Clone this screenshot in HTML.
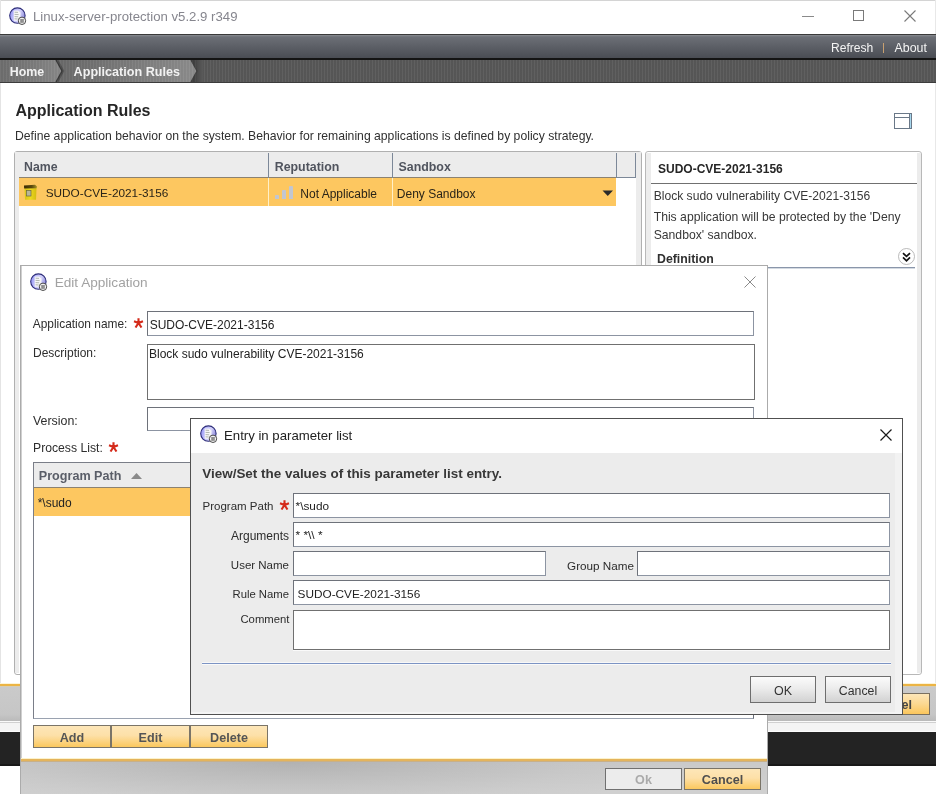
<!DOCTYPE html><html><head><meta charset="utf-8"><style>html,body{margin:0;padding:0;}body{width:936px;height:794px;position:relative;overflow:hidden;background:#fff;will-change:transform;font-family:"Liberation Sans",sans-serif;}div{box-sizing:border-box;}</style></head><body>
<div style="position:absolute;left:0px;top:0px;width:936px;height:1px;background:#d4d4d4"></div>
<div style="position:absolute;left:0px;top:0px;width:1px;height:684px;background:#e4e4e4"></div>
<div style="position:absolute;left:935px;top:0px;width:1px;height:684px;background:#e8e8e8"></div>
<svg style="position:absolute;left:9px;top:7px" width="18" height="18" viewBox="0 0 18 18">
<defs><linearGradient id="ag9_7" x1="0" y1="0" x2="1" y2="0.3"><stop offset="0" stop-color="#8a8af4"/><stop offset="0.35" stop-color="#b8b8fa"/><stop offset="0.7" stop-color="#d4d2fa"/><stop offset="1" stop-color="#9a98e0"/></linearGradient></defs>
<circle cx="8.4" cy="8.6" r="7.7" fill="url(#ag9_7)" stroke="#2c2c78" stroke-width="1.1"/>
<path d="M4.6 3.4 L9.2 3.6 L11.6 5.8 L11 13.8 L4.8 13.8 Z" fill="#f6f6f8"/>
<path d="M5.6 5.2 L9 5.4 M5.6 7.4 L9.6 7.6 M5.6 9.6 L9.2 9.8 M5.6 11.8 L8.6 12" stroke="#a8b0a8" stroke-width="0.9"/>
<circle cx="13" cy="13.8" r="3.7" fill="#f2f2f2" stroke="#3a3a3a" stroke-width="0.9"/>
<rect x="11.3" y="12" width="3.4" height="3.8" fill="#7a7a7a"/>
<path d="M12.1 12 L12.1 15.8 M13.7 12 L13.7 15.8" stroke="#b8b8b8" stroke-width="0.5"/>
</svg>
<div style="position:absolute;top:9.83px;font-size:13.2px;line-height:13.2px;font-weight:400;color:#86868e;white-space:nowrap;left:33px;">Linux-server-protection v5.2.9 r349</div>
<div style="position:absolute;left:802px;top:16px;width:12px;height:1px;background:#8a8a8a"></div>
<div style="position:absolute;left:853px;top:10px;width:11px;height:11px;border:1px solid #7a7a7a"></div>
<svg style="position:absolute;left:903px;top:9px" width="14" height="14" viewBox="0 0 14 14"><path d="M1.5 1.5 L12.5 12.5 M12.5 1.5 L1.5 12.5" stroke="#7a7a7a" stroke-width="1.1"/></svg>
<div style="position:absolute;left:0px;top:34px;width:936px;height:1px;background:#3a3a3a"></div>
<div style="position:absolute;left:0px;top:35px;width:936px;height:23px;background:linear-gradient(#8a8d92 0,#6c6f76 2px,#60636a 40%,#4a4d54)"></div>
<div style="position:absolute;left:0px;top:58px;width:936px;height:2px;background:#141414"></div>
<div style="position:absolute;top:42.26px;font-size:12.1px;line-height:12.1px;font-weight:400;color:#f4f4f4;white-space:nowrap;left:831px;">Refresh</div>
<div style="position:absolute;left:883px;top:43px;width:1px;height:10px;background:#c8a070"></div>
<div style="position:absolute;top:42.00px;font-size:12.4px;line-height:12.4px;font-weight:400;color:#f4f4f4;white-space:nowrap;left:894.5px;">About</div>
<div style="position:absolute;left:0px;top:60px;width:936px;height:22px;background:repeating-linear-gradient(90deg, rgba(255,255,255,0.04) 0 1px, rgba(0,0,0,0.05) 1px 3px),#5a5a5a"></div>
<svg style="position:absolute;left:0;top:60px" width="205" height="22" viewBox="0 0 205 22"><defs><linearGradient id="bc1" x1="0" x2="1"><stop offset="0" stop-color="#6e6e6e"/><stop offset="1" stop-color="#8a8a8a"/></linearGradient><linearGradient id="bc2" x1="0" x2="1"><stop offset="0" stop-color="#6a6a6a"/><stop offset="1" stop-color="#8e8e8e"/></linearGradient><linearGradient id="bc3" x1="0" x2="1"><stop offset="0" stop-color="#3a3a3a"/><stop offset="1" stop-color="#5a5a5a"/></linearGradient></defs><path d="M191 0 L197 11 L191 22 L203 22 L203 0 Z" fill="url(#bc3)"/><path d="M56 0 L191 0 L197 11 L191 22 L56 22 L62 11 Z" fill="url(#bc2)"/><path d="M0 0 L56 0 L62 11 L56 22 L0 22 Z" fill="url(#bc1)"/><path d="M56 0 L62 11 L56 22" fill="none" stroke="#383838" stroke-width="1.3"/><path d="M57.5 0 L63.5 11 L57.5 22" fill="none" stroke="rgba(0,0,0,0.25)" stroke-width="1.5"/><path d="M191 0 L197 11 L191 22" fill="none" stroke="#404040" stroke-width="1.3"/></svg>
<div style="position:absolute;left:0px;top:60px;width:197px;height:22px;background:repeating-linear-gradient(90deg, rgba(255,255,255,0.035) 0 1px, rgba(0,0,0,0.03) 1px 3px);"></div>
<div style="position:absolute;left:0px;top:82px;width:936px;height:1px;background:#3c3c3c"></div>
<div style="position:absolute;top:66.10px;font-size:12.4px;line-height:12.4px;font-weight:700;color:#f2f2f2;white-space:nowrap;left:9.7px;">Home</div>
<div style="position:absolute;top:65.93px;font-size:12.6px;line-height:12.6px;font-weight:700;color:#f2f2f2;white-space:nowrap;left:73.6px;">Application Rules</div>
<div style="position:absolute;top:102.96px;font-size:16px;line-height:16px;font-weight:700;color:#262626;white-space:nowrap;left:15.4px;">Application Rules</div>
<div style="position:absolute;top:129.67px;font-size:12.2px;line-height:12.2px;font-weight:400;color:#303030;white-space:nowrap;left:15px;">Define application behavior on the system. Behavior for remaining applications is defined by policy strategy.</div>
<svg style="position:absolute;left:894px;top:113px" width="19" height="17" viewBox="0 0 19 17"><rect x="0.5" y="0.5" width="17" height="15" fill="#fff" stroke="#6a7888"/><line x1="1" y1="4.5" x2="15" y2="4.5" stroke="#6a7888"/><rect x="16" y="1" width="1" height="14" fill="#a8d8ee"/><line x1="15.5" y1="1" x2="15.5" y2="15" stroke="#6a7888"/></svg>
<div style="position:absolute;left:14px;top:151px;width:628px;height:524px;border:1px solid #b0b0b0;border-radius:3px;background:#fff"></div>
<div style="position:absolute;left:15px;top:152px;width:4px;height:521px;background:#ececec"></div>
<div style="position:absolute;left:636px;top:152px;width:5px;height:521px;background:#ececec"></div>
<div style="position:absolute;left:15px;top:152px;width:626px;height:26px;background:#ececec;border-radius:2px 2px 0 0"></div>
<div style="position:absolute;left:19px;top:177px;width:598px;height:1px;background:#8c8270"></div>
<div style="position:absolute;left:268px;top:153px;width:1px;height:25px;background:#7c8898"></div>
<div style="position:absolute;left:392px;top:153px;width:1px;height:25px;background:#7c8898"></div>
<div style="position:absolute;left:616px;top:153px;width:1px;height:25px;background:#7c8898"></div>
<div style="position:absolute;left:617px;top:177px;width:19px;height:1px;background:#7c8898"></div>
<div style="position:absolute;left:635px;top:153px;width:1px;height:25px;background:#7c8898"></div>
<div style="position:absolute;top:160.99px;font-size:12.3px;line-height:12.3px;font-weight:700;color:#50545e;white-space:nowrap;left:24px;">Name</div>
<div style="position:absolute;top:160.90px;font-size:12.4px;line-height:12.4px;font-weight:700;color:#50545e;white-space:nowrap;left:274.7px;">Reputation</div>
<div style="position:absolute;top:160.90px;font-size:12.4px;line-height:12.4px;font-weight:700;color:#50545e;white-space:nowrap;left:398.5px;">Sandbox</div>
<div style="position:absolute;left:19px;top:178px;width:597px;height:28px;background:#fdc760"></div>
<div style="position:absolute;left:268px;top:178px;width:1px;height:28px;background:#fff0c8"></div>
<div style="position:absolute;left:392px;top:178px;width:1px;height:28px;background:#fff0c8"></div>
<svg style="position:absolute;left:23px;top:184px" width="15" height="17" viewBox="0 0 15 17"><defs><linearGradient id="lidg" x1="0" x2="1"><stop offset="0" stop-color="#3a2c04"/><stop offset="0.6" stop-color="#5a4a10"/><stop offset="1" stop-color="#a89428"/></linearGradient><linearGradient id="boxg" x1="0" x2="1"><stop offset="0" stop-color="#d8c418"/><stop offset="0.5" stop-color="#ecd820"/><stop offset="1" stop-color="#d4bc10"/></linearGradient></defs><path d="M1.5 3.5 L13 3 L13.5 4 L13 15.8 L2 15.8 Z" fill="url(#boxg)"/><path d="M1 1.6 L12 0.8 L14 2.6 L13.6 4.2 L1.2 4.4 Z" fill="url(#lidg)"/><rect x="3.4" y="6.4" width="4.6" height="5.6" fill="#b8b69a" stroke="#6a6840" stroke-width="0.7"/></svg>
<div style="position:absolute;top:187.91px;font-size:11.8px;line-height:11.8px;font-weight:400;color:#2a2418;white-space:nowrap;left:45.7px;">SUDO-CVE-2021-3156</div>
<div style="position:absolute;left:275px;top:195px;width:4px;height:4px;background:#c2c6d0;border-radius:1px 1px 0 0"></div>
<div style="position:absolute;left:282px;top:190px;width:4px;height:9px;background:#c2c6d0;border-radius:1px 1px 0 0"></div>
<div style="position:absolute;left:289px;top:186px;width:4px;height:13px;background:#c2c6d0;border-radius:1px 1px 0 0"></div>
<div style="position:absolute;top:187.74px;font-size:12px;line-height:12px;font-weight:400;color:#2a2418;white-space:nowrap;left:300.3px;">Not Applicable</div>
<div style="position:absolute;top:187.74px;font-size:12px;line-height:12px;font-weight:400;color:#2a2418;white-space:nowrap;left:396.8px;">Deny Sandbox</div>
<svg style="position:absolute;left:602px;top:189.5px" width="12" height="7" viewBox="0 0 12 7"><path d="M0.5 0.5 L11 0.5 L5.75 6 Z" fill="#2a2a2a"/></svg>
<div style="position:absolute;left:645px;top:151px;width:277px;height:524px;border:1px solid #b8b8b8;border-radius:3px;background:#fff"></div>
<div style="position:absolute;left:646px;top:153px;width:5px;height:520px;background:#ececec"></div>
<div style="position:absolute;left:917px;top:153px;width:4px;height:520px;background:#ececec"></div>
<div style="position:absolute;top:162.54px;font-size:12px;line-height:12px;font-weight:700;color:#262626;white-space:nowrap;left:658px;">SUDO-CVE-2021-3156</div>
<div style="position:absolute;left:651px;top:183px;width:266px;height:1px;background:#707070"></div>
<div style="position:absolute;top:189.76px;font-size:12.1px;line-height:12.1px;font-weight:400;color:#383838;white-space:nowrap;left:653.7px;">Block sudo vulnerability CVE-2021-3156</div>
<div style="position:absolute;top:211.47px;font-size:12.2px;line-height:12.2px;font-weight:400;color:#383838;white-space:nowrap;left:653.7px;">This application will be protected by the 'Deny</div>
<div style="position:absolute;top:228.67px;font-size:12.2px;line-height:12.2px;font-weight:400;color:#383838;white-space:nowrap;left:653.7px;">Sandbox' sandbox.</div>
<div style="position:absolute;top:252.59px;font-size:12.3px;line-height:12.3px;font-weight:700;color:#303030;white-space:nowrap;left:657px;">Definition</div>
<svg style="position:absolute;left:897.7px;top:247.8px" width="18" height="18" viewBox="0 0 18 18"><circle cx="8.5" cy="8.5" r="8" fill="#fff" stroke="#a8a8a8" stroke-width="0.8"/><path d="M5 5.2 L8.5 8.4 L12 5.2 M5 9.4 L8.5 12.8 L12 9.4" fill="none" stroke="#111" stroke-width="1.7"/></svg>
<div style="position:absolute;left:651px;top:267px;width:264px;height:1px;background:#8a96aa"></div>
<div style="position:absolute;left:651px;top:268px;width:264px;height:1px;background:#d4dae2"></div>
<div style="position:absolute;left:0px;top:683px;width:936px;height:1px;background:#fdf4d8"></div>
<div style="position:absolute;left:0px;top:684px;width:936px;height:2px;background:#ecb444"></div>
<div style="position:absolute;left:0px;top:686px;width:936px;height:1px;background:#d6cdb6"></div>
<div style="position:absolute;left:0px;top:687px;width:936px;height:34px;background:linear-gradient(#cacaca,#c6c6c6 80%,#bababa)"></div>
<div style="position:absolute;left:848px;top:693px;width:82px;height:22px;border:1px solid #7a7060;background:linear-gradient(#fde6b8,#fcd890 50%,#fbc65c)"></div>
<div style="position:absolute;top:698.83px;font-size:12.6px;line-height:12.6px;font-weight:700;color:#444;white-space:nowrap;right:24px;">Cancel</div>
<div style="position:absolute;left:0px;top:721px;width:936px;height:1px;background:#fafafa"></div>
<div style="position:absolute;left:0px;top:722px;width:936px;height:1px;background:#d0d0d0"></div>
<div style="position:absolute;left:0px;top:723px;width:936px;height:8px;background:#f4f4f4"></div>
<div style="position:absolute;left:0px;top:731px;width:936px;height:1px;background:#fcfcfc"></div>
<div style="position:absolute;left:0px;top:732px;width:936px;height:32px;background:#232323"></div>
<div style="position:absolute;left:0px;top:764px;width:936px;height:2px;background:#181818"></div>
<div style="position:absolute;left:20px;top:265px;width:748px;height:540px;border:1px solid #ababab;box-shadow:inset 1px 0 0 #d0d0d0;background:#fff"></div>
<svg style="position:absolute;left:30px;top:273px" width="18" height="18" viewBox="0 0 18 18">
<defs><linearGradient id="ag30_273" x1="0" y1="0" x2="1" y2="0.3"><stop offset="0" stop-color="#8a8af4"/><stop offset="0.35" stop-color="#b8b8fa"/><stop offset="0.7" stop-color="#d4d2fa"/><stop offset="1" stop-color="#9a98e0"/></linearGradient></defs>
<circle cx="8.4" cy="8.6" r="7.7" fill="url(#ag30_273)" stroke="#2c2c78" stroke-width="1.1"/>
<path d="M4.6 3.4 L9.2 3.6 L11.6 5.8 L11 13.8 L4.8 13.8 Z" fill="#f6f6f8"/>
<path d="M5.6 5.2 L9 5.4 M5.6 7.4 L9.6 7.6 M5.6 9.6 L9.2 9.8 M5.6 11.8 L8.6 12" stroke="#a8b0a8" stroke-width="0.9"/>
<circle cx="13" cy="13.8" r="3.7" fill="#f2f2f2" stroke="#3a3a3a" stroke-width="0.9"/>
<rect x="11.3" y="12" width="3.4" height="3.8" fill="#7a7a7a"/>
<path d="M12.1 12 L12.1 15.8 M13.7 12 L13.7 15.8" stroke="#b8b8b8" stroke-width="0.5"/>
</svg>
<div style="position:absolute;top:275.99px;font-size:13.6px;line-height:13.6px;font-weight:400;color:#a2a2a2;white-space:nowrap;left:54.7px;">Edit Application</div>
<svg style="position:absolute;left:743px;top:275px" width="14" height="14" viewBox="0 0 14 14"><path d="M1.5 1.5 L12.5 12.5 M12.5 1.5 L1.5 12.5" stroke="#8a8a8a" stroke-width="1"/></svg>
<div style="position:absolute;top:319.13px;font-size:11.9px;line-height:11.9px;font-weight:400;color:#2e2e2e;white-space:nowrap;left:32.8px;">Application name:</div>
<svg style="position:absolute;left:133px;top:318px" width="11" height="10" viewBox="0 0 11 10"><path d="M5.5 0.3 L5.5 5 M5.5 5 L1 3.2 M5.5 5 L10 3.2 M5.5 5 L2.5 9.5 M5.5 5 L8.5 9.5" stroke="#d42a1a" stroke-width="2.1"/></svg>
<div style="position:absolute;left:147px;top:311px;width:607px;height:25px;background:#fff;border-top:1px solid #6e727a;border-left:1px solid #6e727a;border-right:1px solid #8c94a2;border-bottom:1px solid #8c94a2;box-shadow:inset 0 -1px 0 #fff"></div>
<div style="position:absolute;top:318.94px;font-size:12px;line-height:12px;font-weight:400;color:#222;white-space:nowrap;left:149.7px;">SUDO-CVE-2021-3156</div>
<div style="position:absolute;top:347.04px;font-size:12px;line-height:12px;font-weight:400;color:#2e2e2e;white-space:nowrap;left:33px;">Description:</div>
<div style="position:absolute;left:147px;top:344px;width:608px;height:56px;background:#fff;border:1px solid #707070"></div>
<div style="position:absolute;top:348.04px;font-size:12px;line-height:12px;font-weight:400;color:#222;white-space:nowrap;left:149px;">Block sudo vulnerability CVE-2021-3156</div>
<div style="position:absolute;top:414.70px;font-size:12.4px;line-height:12.4px;font-weight:400;color:#2e2e2e;white-space:nowrap;left:33px;">Version:</div>
<div style="position:absolute;left:147px;top:407px;width:607px;height:24px;background:#fff;border-top:1px solid #6e727a;border-left:1px solid #6e727a;border-right:1px solid #8c94a2;border-bottom:1px solid #8c94a2;box-shadow:inset 0 -1px 0 #fff"></div>
<div style="position:absolute;top:442.27px;font-size:12.2px;line-height:12.2px;font-weight:400;color:#2e2e2e;white-space:nowrap;left:33px;">Process List:</div>
<svg style="position:absolute;left:108px;top:442px" width="11" height="10" viewBox="0 0 11 10"><path d="M5.5 0.3 L5.5 5 M5.5 5 L1 3.2 M5.5 5 L10 3.2 M5.5 5 L2.5 9.5 M5.5 5 L8.5 9.5" stroke="#d42a1a" stroke-width="2.1"/></svg>
<div style="position:absolute;left:33px;top:462px;width:721px;height:257px;border-left:1px solid #7a7e88;border-top:1px solid #7a7e88;border-right:1px solid #6a6e78;border-bottom:1px solid #9aa2b0;background:#fff"></div>
<div style="position:absolute;left:34px;top:463px;width:719px;height:25px;background:#ececec"></div>
<div style="position:absolute;left:34px;top:487px;width:719px;height:1px;background:#8c8270"></div>
<div style="position:absolute;left:34px;top:488px;width:719px;height:1px;background:#b8a070"></div>
<div style="position:absolute;top:470.33px;font-size:12.6px;line-height:12.6px;font-weight:700;color:#5a5e68;white-space:nowrap;left:38.8px;">Program Path</div>
<svg style="position:absolute;left:130px;top:472px" width="13" height="8" viewBox="0 0 13 8"><path d="M1 7 L6.5 1 L12 7 Z" fill="#8a8a8a"/></svg>
<div style="position:absolute;left:34px;top:488px;width:719px;height:28px;background:#fdc760"></div>
<div style="position:absolute;top:496.84px;font-size:12px;line-height:12px;font-weight:400;color:#222;white-space:nowrap;left:37.7px;">*\sudo</div>
<div style="position:absolute;left:33px;top:725px;width:78px;height:23px;border:1px solid #7a7468;background:linear-gradient(#fde6b8,#fde0a8 45%,#fbc85e)"></div>
<div style="position:absolute;left:33px;top:725px;width:78px;height:23px;line-height:23px;text-align:center;font-size:12.6px;font-weight:700;color:#555"><span style="position:relative;top:1.5px">Add</span></div>
<div style="position:absolute;left:111px;top:725px;width:79px;height:23px;border:1px solid #7a7468;background:linear-gradient(#fde6b8,#fde0a8 45%,#fbc85e)"></div>
<div style="position:absolute;left:111px;top:725px;width:79px;height:23px;line-height:23px;text-align:center;font-size:12.6px;font-weight:700;color:#555"><span style="position:relative;top:1.5px">Edit</span></div>
<div style="position:absolute;left:190px;top:725px;width:78px;height:23px;border:1px solid #7a7468;background:linear-gradient(#fde6b8,#fde0a8 45%,#fbc85e)"></div>
<div style="position:absolute;left:190px;top:725px;width:78px;height:23px;line-height:23px;text-align:center;font-size:12.6px;font-weight:700;color:#555"><span style="position:relative;top:1.5px">Delete</span></div>
<div style="position:absolute;left:21px;top:758px;width:746px;height:1px;background:#fcf2cc"></div>
<div style="position:absolute;left:21px;top:759px;width:746px;height:2px;background:#e4b45c"></div>
<div style="position:absolute;left:21px;top:761px;width:746px;height:1px;background:#c8b088"></div>
<div style="position:absolute;left:21px;top:762px;width:746px;height:32px;background:linear-gradient(rgba(255,255,255,0),rgba(255,255,255,0.12)),radial-gradient(ellipse 380px 55px at 270px 0px, #b2b2b2, #c6c6c6 75%, #cacaca)"></div>
<div style="position:absolute;left:605px;top:768px;width:77px;height:22px;border:1px solid #707070;background:#ececec"></div>
<div style="position:absolute;left:605px;top:768px;width:77px;height:22px;line-height:22px;text-align:center;font-size:12.6px;font-weight:700;color:#aaaaaa"><span style="position:relative;top:1px">Ok</span></div>
<div style="position:absolute;left:684px;top:768px;width:77px;height:22px;border:1px solid #7a7468;background:linear-gradient(#fde6b8,#fde0a8 45%,#fbc85e)"></div>
<div style="position:absolute;left:684px;top:768px;width:77px;height:22px;line-height:22px;text-align:center;font-size:12.6px;font-weight:700;color:#4e4e4e"><span style="position:relative;top:1.2px">Cancel</span></div>
<div style="position:absolute;left:190px;top:418px;width:713px;height:297px;border:1px solid #505050;background:#ececec"></div>
<div style="position:absolute;left:191px;top:419px;width:711px;height:34px;background:#fff"></div>
<div style="position:absolute;left:895px;top:453px;width:7px;height:261px;background:#f2f2f2"></div>
<div style="position:absolute;left:191px;top:712px;width:711px;height:2px;background:#f4f4f4"></div>
<svg style="position:absolute;left:200px;top:425px" width="18" height="18" viewBox="0 0 18 18">
<defs><linearGradient id="ag200_425" x1="0" y1="0" x2="1" y2="0.3"><stop offset="0" stop-color="#8a8af4"/><stop offset="0.35" stop-color="#b8b8fa"/><stop offset="0.7" stop-color="#d4d2fa"/><stop offset="1" stop-color="#9a98e0"/></linearGradient></defs>
<circle cx="8.4" cy="8.6" r="7.7" fill="url(#ag200_425)" stroke="#2c2c78" stroke-width="1.1"/>
<path d="M4.6 3.4 L9.2 3.6 L11.6 5.8 L11 13.8 L4.8 13.8 Z" fill="#f6f6f8"/>
<path d="M5.6 5.2 L9 5.4 M5.6 7.4 L9.6 7.6 M5.6 9.6 L9.2 9.8 M5.6 11.8 L8.6 12" stroke="#a8b0a8" stroke-width="0.9"/>
<circle cx="13" cy="13.8" r="3.7" fill="#f2f2f2" stroke="#3a3a3a" stroke-width="0.9"/>
<rect x="11.3" y="12" width="3.4" height="3.8" fill="#7a7a7a"/>
<path d="M12.1 12 L12.1 15.8 M13.7 12 L13.7 15.8" stroke="#b8b8b8" stroke-width="0.5"/>
</svg>
<div style="position:absolute;top:428.83px;font-size:13.2px;line-height:13.2px;font-weight:400;color:#222;white-space:nowrap;left:224px;">Entry in parameter list</div>
<svg style="position:absolute;left:879px;top:428px" width="14" height="14" viewBox="0 0 14 14"><path d="M1.5 1.5 L12.5 12.5 M12.5 1.5 L1.5 12.5" stroke="#1a1a1a" stroke-width="1.2"/></svg>
<div style="position:absolute;top:467.21px;font-size:13.45px;line-height:13.45px;font-weight:700;color:#383838;white-space:nowrap;left:202.3px;">View/Set the values of this parameter list entry.</div>
<div style="position:absolute;top:501.47px;font-size:11.5px;line-height:11.5px;font-weight:400;color:#2c2c2c;white-space:nowrap;right:662.5px;">Program Path</div>
<svg style="position:absolute;left:278.5px;top:500px" width="11" height="10" viewBox="0 0 11 10"><path d="M5.5 0.3 L5.5 5 M5.5 5 L1 3.2 M5.5 5 L10 3.2 M5.5 5 L2.5 9.5 M5.5 5 L8.5 9.5" stroke="#d42a1a" stroke-width="2.1"/></svg>
<div style="position:absolute;left:293px;top:493px;width:597px;height:25px;background:#fff;border-top:1px solid #6e727a;border-left:1px solid #6e727a;border-right:1px solid #8c94a2;border-bottom:1px solid #8c94a2;box-shadow:inset 0 -1px 0 #fff"></div>
<div style="position:absolute;top:501.01px;font-size:11.8px;line-height:11.8px;font-weight:400;color:#222;white-space:nowrap;left:295.6px;">*\sudo</div>
<div style="position:absolute;top:529.84px;font-size:12px;line-height:12px;font-weight:400;color:#2c2c2c;white-space:nowrap;right:647px;">Arguments</div>
<div style="position:absolute;left:293px;top:522px;width:597px;height:25px;background:#fff;border-top:1px solid #6e727a;border-left:1px solid #6e727a;border-right:1px solid #8c94a2;border-bottom:1px solid #8c94a2;box-shadow:inset 0 -1px 0 #fff"></div>
<div style="position:absolute;top:530.01px;font-size:11.8px;line-height:11.8px;font-weight:400;color:#222;white-space:nowrap;left:295.6px;">* *\\ *</div>
<div style="position:absolute;top:559.87px;font-size:11.5px;line-height:11.5px;font-weight:400;color:#2c2c2c;white-space:nowrap;right:647px;">User Name</div>
<div style="position:absolute;left:293px;top:551px;width:253px;height:25px;background:#fff;border-top:1px solid #6e727a;border-left:1px solid #6e727a;border-right:1px solid #8c94a2;border-bottom:1px solid #8c94a2;box-shadow:inset 0 -1px 0 #fff"></div>
<div style="position:absolute;top:559.50px;font-size:11.7px;line-height:11.7px;font-weight:400;color:#2c2c2c;white-space:nowrap;right:302px;">Group Name</div>
<div style="position:absolute;left:637px;top:551px;width:253px;height:25px;background:#fff;border-top:1px solid #6e727a;border-left:1px solid #6e727a;border-right:1px solid #8c94a2;border-bottom:1px solid #8c94a2;box-shadow:inset 0 -1px 0 #fff"></div>
<div style="position:absolute;top:588.93px;font-size:11.3px;line-height:11.3px;font-weight:400;color:#2c2c2c;white-space:nowrap;right:647px;">Rule Name</div>
<div style="position:absolute;left:293px;top:580px;width:597px;height:25px;background:#fff;border-top:1px solid #6e727a;border-left:1px solid #6e727a;border-right:1px solid #8c94a2;border-bottom:1px solid #8c94a2;box-shadow:inset 0 -1px 0 #fff"></div>
<div style="position:absolute;top:588.51px;font-size:11.8px;line-height:11.8px;font-weight:400;color:#222;white-space:nowrap;left:297.6px;">SUDO-CVE-2021-3156</div>
<div style="position:absolute;top:614.03px;font-size:11.3px;line-height:11.3px;font-weight:400;color:#2c2c2c;white-space:nowrap;right:646.6px;">Comment</div>
<div style="position:absolute;left:293px;top:610px;width:597px;height:40px;background:#fff;border:1px solid #707070;box-shadow:0 1px 0 #fafafa"></div>
<div style="position:absolute;left:202px;top:662px;width:689px;height:1px;background:#f8f8f8"></div>
<div style="position:absolute;left:202px;top:663px;width:689px;height:1px;background:#7c94c4"></div>
<div style="position:absolute;left:202px;top:664px;width:689px;height:1px;background:#fafafa"></div>
<div style="position:absolute;left:750px;top:676px;width:66px;height:27px;border:1px solid #6e6e6e;background:linear-gradient(#fbfbfb,#ececec 45%,#d2d2d2)"></div>
<div style="position:absolute;left:750px;top:676px;width:66px;height:27px;line-height:27px;text-align:center;font-size:12.5px;color:#333"><span style="position:relative;top:1.5px">OK</span></div>
<div style="position:absolute;left:825px;top:676px;width:66px;height:27px;border:1px solid #6e6e6e;background:linear-gradient(#fbfbfb,#ececec 45%,#d2d2d2)"></div>
<div style="position:absolute;left:825px;top:676px;width:66px;height:27px;line-height:27px;text-align:center;font-size:12.3px;color:#333"><span style="position:relative;top:1.5px">Cancel</span></div>
</body></html>
